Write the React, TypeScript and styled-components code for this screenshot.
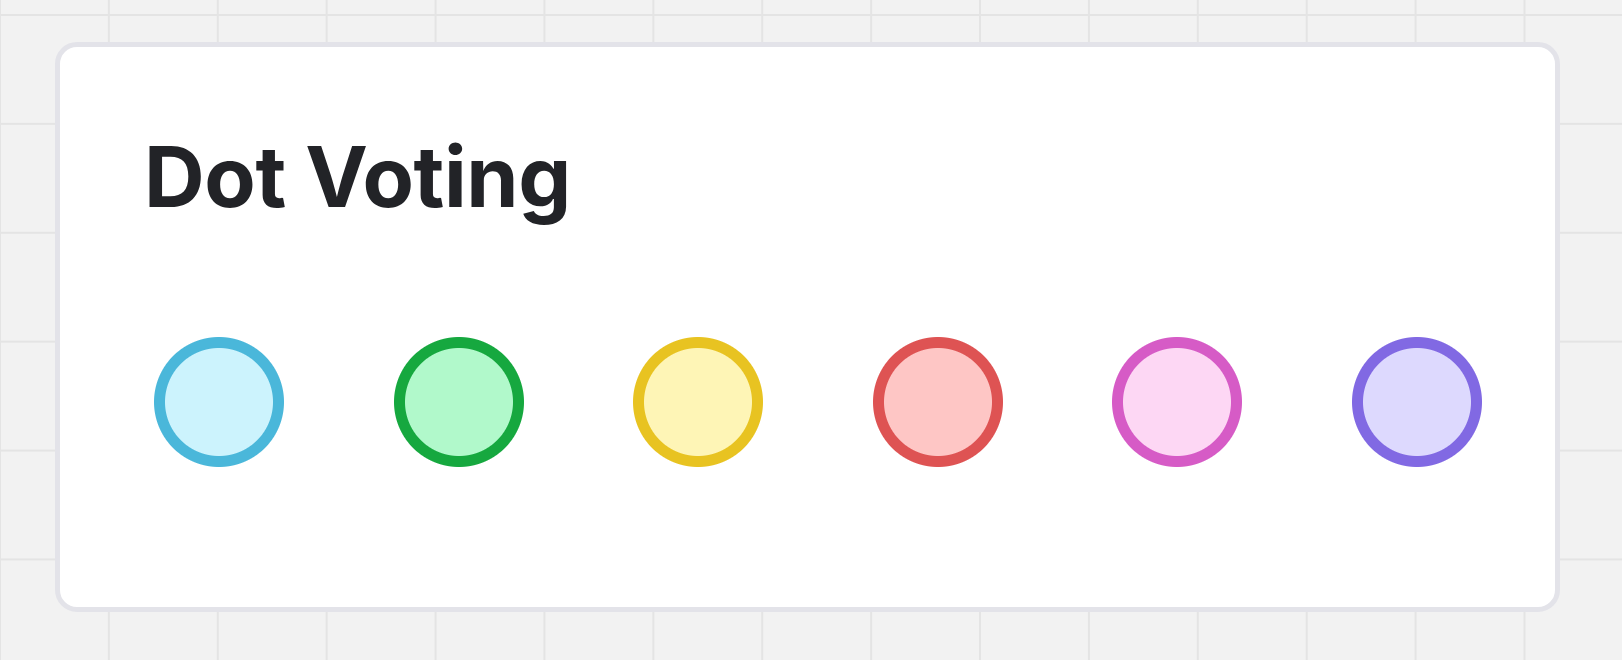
import styled, { createGlobalStyle } from "styled-components";

const GlobalStyle = createGlobalStyle`
  html, body {
    margin: 0;
    padding: 0;
  }
  body {
    font-family: Inter, "Noto Sans", sans-serif;
    background-color: #f2f2f2;
    background-image:
      linear-gradient(to right, #e4e4e4 1.5px, transparent 1.5px),
      linear-gradient(to bottom, #e4e4e4 1.5px, transparent 1.5px);
    background-size: 108.9px 108.9px;
    background-position: -1px 14px;
    min-height: 660px;
  }
`;

const Page = styled.div`
  padding: 42px 0 0 55px;
`;

const Card = styled.div`
  box-sizing: border-box;
  width: 1505px;
  height: 570px;
  background: #ffffff;
  border: 5px solid #e3e3e9;
  border-radius: 22px;
  padding: 88px 0 0 84px;
  display: flex;
  flex-direction: column;
`;

const Title = styled.h1`
  margin: 0;
  font-family: Inter, "Noto Sans", sans-serif;
  font-size: 84px;
  line-height: 1;
  font-weight: 700;
  color: #222327;
  letter-spacing: -0.4px;
`;

const DotRow = styled.div`
  display: flex;
  gap: 109.6px;
  margin-top: 118px;
  padding-left: 10px;
`;

const Dot = styled.div<{ $ring: string; $fill: string }>`
  width: 130px;
  height: 130px;
  flex: none;
  cursor: pointer;
  background: radial-gradient(
    circle closest-side,
    ${(p) => p.$fill} 0,
    ${(p) => p.$fill} 53.5px,
    ${(p) => p.$ring} 54.5px,
    ${(p) => p.$ring} 64.5px,
    rgba(255, 255, 255, 0) 65.5px
  );
`;

const dots = [
  { ring: "#4ab7da", fill: "#ccf3fd" },
  { ring: "#16a83f", fill: "#b1f9cb" },
  { ring: "#e8c321", fill: "#fef5b6" },
  { ring: "#de5353", fill: "#fec6c5" },
  { ring: "#d65bc6", fill: "#fdd7f4" },
  { ring: "#8169e3", fill: "#ddd9fe" },
];

function App() {
  return (
    <>
      <GlobalStyle />
      <Page>
        <Card>
          <Title>Dot Voting</Title>
          <DotRow>
            {dots.map((d, i) => (
              <Dot key={i} $ring={d.ring} $fill={d.fill} role="button" aria-label={`Dot ${i + 1}`} />
            ))}
          </DotRow>
        </Card>
      </Page>
    </>
  );
}

export default App;
